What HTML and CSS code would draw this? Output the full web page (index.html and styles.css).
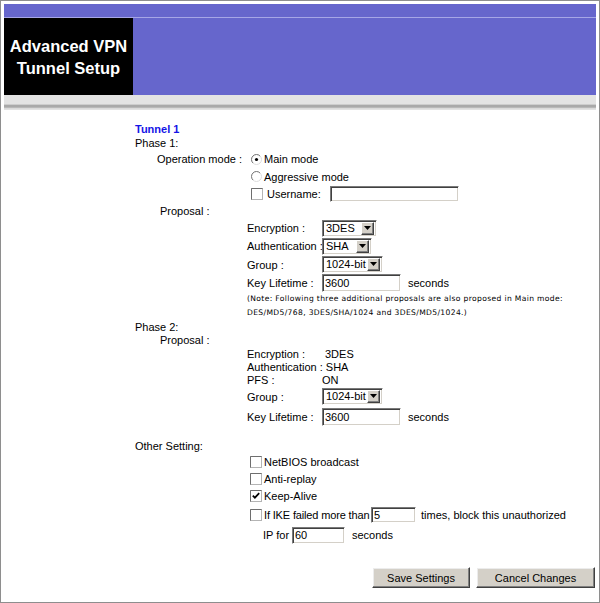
FILE: index.html
```html
<!DOCTYPE html>
<html>
<head>
<meta charset="utf-8">
<title>Advanced VPN Tunnel Setup</title>
<link rel="stylesheet" href="styles.css">
</head>
<body>
<div class="frame">
  <div class="topbar"></div>
  <div class="banner">
    <div class="title">Advanced VPN<br>Tunnel Setup</div>
    <div class="banner-fill"></div>
  </div>
  <div class="band"></div>

  <form class="form">
    <div class="r h14 tunnel">Tunnel 1</div>
    <div class="r h14">Phase 1:</div>

    <div class="r h18 in-op">
      <span class="lbl-op">Operation mode :</span>
      <svg class="radio" width="11" height="11" viewBox="0 0 11 11"><circle cx="5.5" cy="5.5" r="5" fill="#fff" stroke="#dcdcdc"/><path d="M1.96 9.04A5 5 0 0 1 9.04 1.96" fill="none" stroke="#7a7a7a"/><circle cx="5.5" cy="5.5" r="1.6" fill="#000"/></svg>
      <span class="opt-txt">Main mode</span>
    </div>
    <div class="r h17 in-opt">
      <svg class="radio" width="11" height="11" viewBox="0 0 11 11"><circle cx="5.5" cy="5.5" r="5" fill="#fff" stroke="#dcdcdc"/><path d="M1.96 9.04A5 5 0 0 1 9.04 1.96" fill="none" stroke="#7a7a7a"/></svg>
      <span class="opt-txt">Aggressive mode</span>
    </div>
    <div class="r h18 in-opt">
      <svg class="cb" width="12" height="12" viewBox="0 0 12 12"><rect x="0.5" y="0.5" width="11" height="11" fill="#fff" stroke="#b4b4b4"/><path d="M0.5 11.5V0.5H11.5" fill="none" stroke="#6e6e6e"/></svg>
      <span class="uname">Username:</span>
      <input class="txt w129 h16" type="text" value="">
    </div>

    <div class="r h16 in-prop">Proposal :</div>
    <div class="r h18 in-sub">
      <span class="lbl-sub">Encryption :</span>
      <span class="sel w55"><span class="sel-val">3DES</span><span class="sel-btn"><svg width="7" height="4" viewBox="0 0 7 4"><path d="M0 0H7L3.5 4Z" fill="#000"/></svg></span></span>
    </div>
    <div class="r h18 in-sub">
      <span class="lbl-sub">Authentication :</span>
      <span class="sel w50"><span class="sel-val">SHA</span><span class="sel-btn"><svg width="7" height="4" viewBox="0 0 7 4"><path d="M0 0H7L3.5 4Z" fill="#000"/></svg></span></span>
    </div>
    <div class="r h19 in-sub">
      <span class="lbl-sub">Group :</span>
      <span class="sel w61"><span class="sel-val">1024-bit</span><span class="sel-btn"><svg width="7" height="4" viewBox="0 0 7 4"><path d="M0 0H7L3.5 4Z" fill="#000"/></svg></span></span>
    </div>
    <div class="r h18 in-sub">
      <span class="lbl-sub">Key Lifetime :</span>
      <input class="txt w79 h18 ml2" type="text" value="3600">
      <span class="unit">seconds</span>
    </div>
    <div class="note">(Note: Following three additional proposals are also proposed in Main mode:<br>DES/MD5/768, 3DES/SHA/1024 and 3DES/MD5/1024.)</div>

    <div class="r h13">Phase 2:</div>
    <div class="r h14 in-prop">Proposal :</div>
    <div class="r h13 in-sub"><span class="lbl-sub">Encryption :</span><span class="val">3DES</span></div>
    <div class="r h13 in-sub"><span class="lbl-sub lbl-auth">Authentication :</span><span class="val-auth">SHA</span></div>
    <div class="r h13 in-sub"><span class="lbl-sub">PFS :</span><span class="val0">ON</span></div>
    <div class="r h21 in-sub">
      <span class="lbl-sub">Group :</span>
      <span class="sel w61"><span class="sel-val">1024-bit</span><span class="sel-btn"><svg width="7" height="4" viewBox="0 0 7 4"><path d="M0 0H7L3.5 4Z" fill="#000"/></svg></span></span>
    </div>
    <div class="r h19 in-sub">
      <span class="lbl-sub">Key Lifetime :</span>
      <input class="txt w79 h18 ml2" type="text" value="3600">
      <span class="unit">seconds</span>
    </div>

    <div class="r h14 other">Other Setting:</div>
    <div class="r h17 in-chk">
      <svg class="cb" width="12" height="12" viewBox="0 0 12 12"><rect x="0.5" y="0.5" width="11" height="11" fill="#fff" stroke="#b4b4b4"/><path d="M0.5 11.5V0.5H11.5" fill="none" stroke="#6e6e6e"/></svg>
      <span class="chk-txt">NetBIOS broadcast</span>
    </div>
    <div class="r h17 in-chk">
      <svg class="cb" width="12" height="12" viewBox="0 0 12 12"><rect x="0.5" y="0.5" width="11" height="11" fill="#fff" stroke="#b4b4b4"/><path d="M0.5 11.5V0.5H11.5" fill="none" stroke="#6e6e6e"/></svg>
      <span class="chk-txt">Anti-replay</span>
    </div>
    <div class="r h17 in-chk">
      <svg class="cb" width="12" height="12" viewBox="0 0 12 12"><rect x="0.5" y="0.5" width="11" height="11" fill="#fff" stroke="#b4b4b4"/><path d="M0.5 11.5V0.5H11.5" fill="none" stroke="#6e6e6e"/><path d="M2.8 5.6L4.9 7.7L9.2 3.2" fill="none" stroke="#000" stroke-width="1.7"/></svg>
      <span class="chk-txt">Keep-Alive</span>
    </div>
    <div class="r h22 in-chk">
      <svg class="cb" width="12" height="12" viewBox="0 0 12 12"><rect x="0.5" y="0.5" width="11" height="11" fill="#fff" stroke="#b4b4b4"/><path d="M0.5 11.5V0.5H11.5" fill="none" stroke="#6e6e6e"/></svg>
      <span class="chk-txt ike">If IKE failed more than</span>
      <input class="txt w45 h16" type="text" value="5">
      <span class="times">times, block this unauthorized</span>
    </div>
    <div class="r h18 in-ip">
      <span class="ipfor">IP for</span>
      <input class="txt w53 h17" type="text" value="60">
      <span class="unit">seconds</span>
    </div>
  </form>

  <div class="actions">
    <button type="button" class="btn save">Save Settings</button>
    <button type="button" class="btn cancel">Cancel Changes</button>
  </div>
</div>
</body>
</html>
```

FILE: styles.css
```css
* { box-sizing: border-box; }
html, body { margin: 0; padding: 0; background: #fff; }
body {
  font-family: "Liberation Sans", Arial, sans-serif;
  font-size: 11px;
  color: #000;
}
.frame {
  width: 600px;
  height: 603px;
  border: 1px solid #8e8e8e;
  padding: 3px;
  display: flex;
  flex-direction: column;
}
.topbar {
  height: 14px;
  background: #6666cc;
  border-bottom: 1px solid #a6a6e6;
}
.banner {
  height: 77px;
  display: flex;
  background: #6666cc;
}
.title {
  width: 129px;
  background: #000;
  color: #fff;
  font-weight: bold;
  font-size: 16.5px;
  line-height: 22px;
  display: flex;
  align-items: center;
  justify-content: center;
  text-align: center;
}
.banner-fill { flex: 1; }
.band {
  height: 15px;
  background: linear-gradient(to bottom,
    #e3e3e3 0, #e3e3e3 9px,
    #cdcdcd 9px, #cdcdcd 10px,
    #a9a9a9 10px, #a9a9a9 12px,
    #b8b8b8 12px, #b8b8b8 13px,
    #d6d6d6 13px, #e6e6e6 15px);
}

.form { padding: 12px 0 0 131px; margin: 0; }
.r { display: flex; align-items: center; white-space: nowrap; }
.h13 { height: 13px; }
.h14 { height: 14px; }
.h16 { height: 16px; }
.h17 { height: 17px; }
.h18 { height: 18px; }
.h19 { height: 19px; }
.h21 { height: 21px; }
.h22 { height: 22px; }

.tunnel { font-weight: bold; color: #1414e6; }
.in-op { padding-left: 22px; }
.lbl-op { width: 94px; flex: none; }
.in-opt { padding-left: 116px; }
.radio { flex: none; margin-right: 1px; }
.opt-txt { margin-left: 1px; }
.cb { flex: none; }
.uname { width: 63px; margin-left: 4px; }
.in-prop { padding-left: 25px; }
.in-sub { padding-left: 112px; }
.lbl-sub { width: 75px; flex: none; }
.lbl-auth { width: auto; }
.val { padding-left: 3px; }
.val0 { padding-left: 0; }
.val-auth { padding-left: 3px; }
.ml2 { margin-left: 2px; }
.unit { margin-left: 7px; }

.txt {
  font-family: "Liberation Sans", Arial, sans-serif;
  font-size: 11px;
  color: #000;
  background: #fff;
  border: 1px solid;
  border-color: #7a7a7a #ffffff #ffffff #7a7a7a;
  box-shadow: inset 1px 1px 0 #404040, inset -1px -1px 0 #d4d0c8;
  padding: 0 2px;
  margin: 0;
  outline: none;
}
.w45 { width: 45px; }
.w53 { width: 53px; }
.w79 { width: 79px; }
.w129 { width: 129px; }
input.h16 { height: 16px; }
input.h17 { height: 17px; }
input.h18 { height: 18px; }

.sel {
  display: inline-flex;
  height: 17px;
  background: #fff;
  border: 1px solid;
  border-color: #7a7a7a #ffffff #ffffff #7a7a7a;
  box-shadow: inset 1px 1px 0 #404040, inset -1px -1px 0 #d4d0c8;
  padding: 1px;
}
.w50 { width: 50px; }
.w55 { width: 55px; }
.w61 { width: 61px; }
.sel-val {
  flex: 1;
  padding-left: 2px;
  line-height: 13px;
  overflow: hidden;
}
.sel-btn {
  flex: none;
  width: 13px;
  height: 13px;
  margin: 0 1px 1px 0;
  background: #d4d0c8;
  border: 1px solid;
  border-color: #ffffff #404040 #404040 #ffffff;
  box-shadow: inset -1px -1px 0 #808080;
  display: flex;
  align-items: center;
  justify-content: center;
  padding: 0 1px 1px 0;
}

.note {
  padding-left: 112px;
  font-family: "DejaVu Sans", Verdana, sans-serif;
  font-size: 7.6px;
  letter-spacing: 0.35px;
  line-height: 14px;
  height: 28px;
  color: #000;
  white-space: nowrap;
}

.other { margin-top: 13px; }
.in-chk { padding-left: 115px; }
.chk-txt { margin-left: 2px; }
.ike { width: 107px; letter-spacing: -0.15px; }
.times { margin-left: 5px; }
.in-ip { padding-left: 128px; }
.ipfor { width: 29px; }

.actions {
  display: flex;
  justify-content: flex-end;
  gap: 6px;
  margin-top: 23px;
  padding-right: 1px;
}
.btn {
  height: 21px;
  background: #d4d0c8;
  border: 1px solid;
  border-color: #ffffff #404040 #404040 #ffffff;
  box-shadow: inset -1px -1px 0 #808080, inset 1px 1px 0 #ececec;
  font-family: "Liberation Sans", Arial, sans-serif;
  font-size: 11px;
  color: #000;
  padding: 0;
  margin: 0;
}
.save { width: 98px; }
.cancel { width: 119px; }
```
